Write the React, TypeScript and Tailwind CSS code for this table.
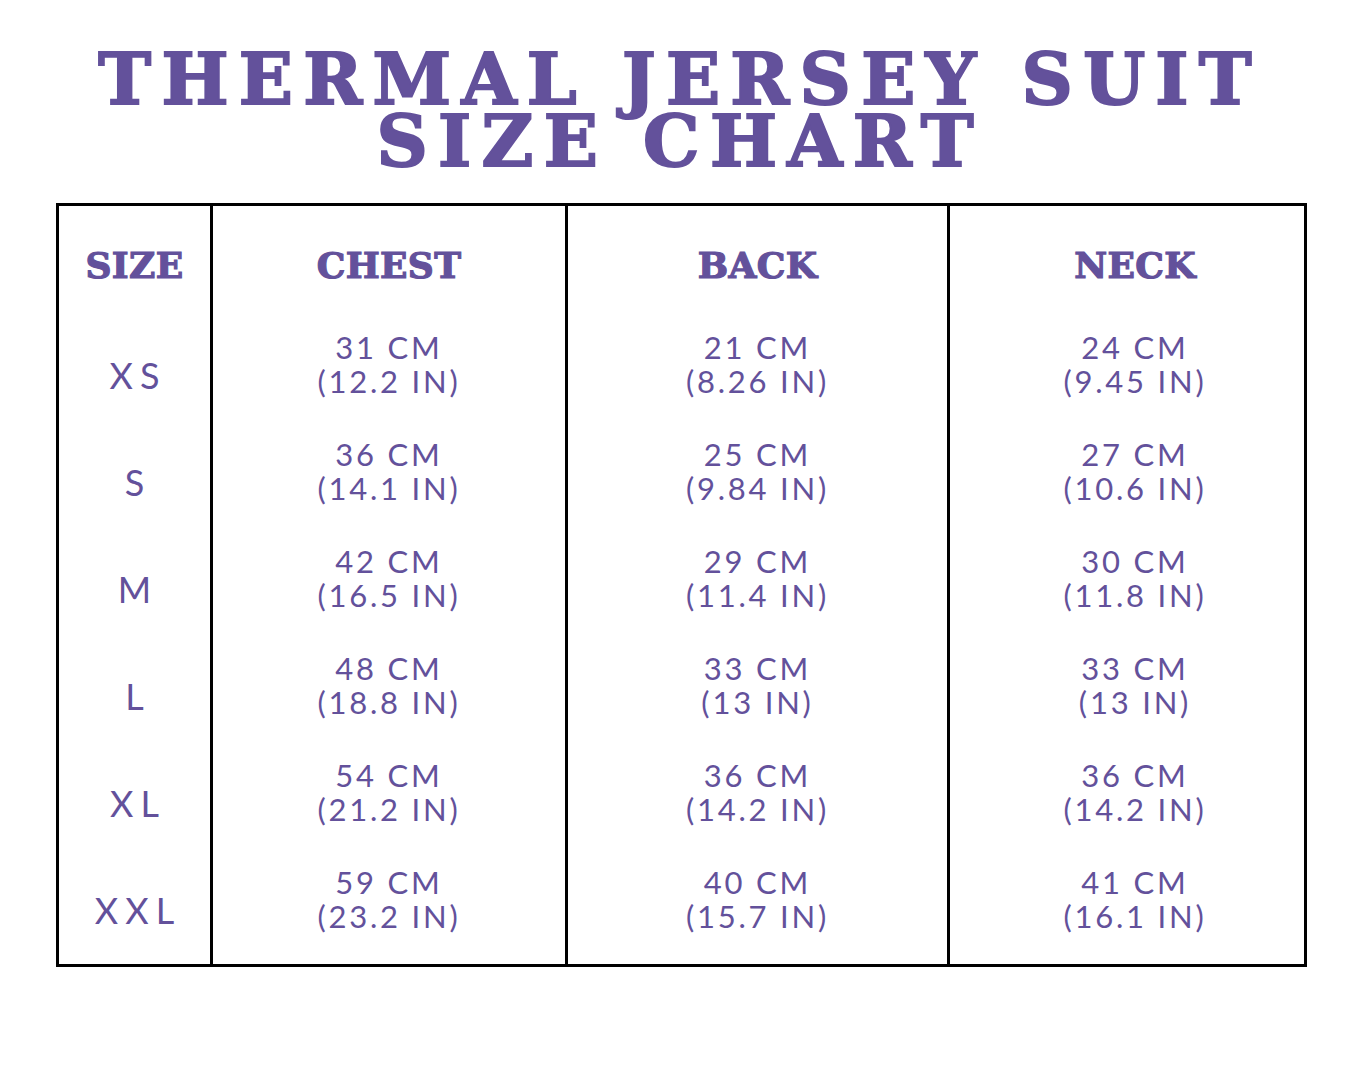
import React from "react";

const rows = [
  { size: "XS", chest: ["31 CM", "(12.2 IN)"], back: ["21 CM", "(8.26 IN)"], neck: ["24 CM", "(9.45 IN)"] },
  { size: "S", chest: ["36 CM", "(14.1 IN)"], back: ["25 CM", "(9.84 IN)"], neck: ["27 CM", "(10.6 IN)"] },
  { size: "M", chest: ["42 CM", "(16.5 IN)"], back: ["29 CM", "(11.4 IN)"], neck: ["30 CM", "(11.8 IN)"] },
  { size: "L", chest: ["48 CM", "(18.8 IN)"], back: ["33 CM", "(13 IN)"], neck: ["33 CM", "(13 IN)"] },
  { size: "XL", chest: ["54 CM", "(21.2 IN)"], back: ["36 CM", "(14.2 IN)"], neck: ["36 CM", "(14.2 IN)"] },
  { size: "XXL", chest: ["59 CM", "(23.2 IN)"], back: ["40 CM", "(15.7 IN)"], neck: ["41 CM", "(16.1 IN)"] },
];

const serif = "font-['DejaVu_Serif',serif] font-bold";
const sans = "font-['Lato',sans-serif]";

function Header({ label }: { label: string }) {
  return (
    <div className="h-[104px] flex items-center justify-center pt-[14px]">
      <span
        className={`${serif} text-[36px] leading-none text-[#63519b] tracking-[0.01em] [-webkit-text-stroke:1.2px_#63519b]`}
      >
        {label}
      </span>
    </div>
  );
}

function Cell({ lines }: { lines: string[] }) {
  return (
    <div className="h-[107px] flex flex-col items-center justify-center">
      {lines.map((l) => (
        <span key={l} className={`${sans} text-[31px] leading-[34px] text-[#63519b] tracking-[0.09em]`}>
          {l}
        </span>
      ))}
    </div>
  );
}

export default function App() {
  return (
    <div className="w-[1350px] h-[1080px] bg-white overflow-hidden">
      <div className="pt-[48px] flex flex-col items-center">
        <div
          className={`${serif} text-[71px] leading-[62px] text-[#63519b] tracking-[0.145em] pl-[0.145em] text-center uppercase [-webkit-text-stroke:2px_#63519b]`}
        >
          <div>THERMAL JERSEY SUIT</div>
          <div>SIZE CHART</div>
        </div>
      </div>
      <div className="mt-[31px] ml-[56px] w-[1251px] border-[3px] border-black flex">
        <div className="w-[154px] border-r-[3px] border-black">
          <Header label="SIZE" />
          {rows.map((r) => (
            <div key={r.size} className="h-[107px] flex items-center justify-center pt-[22px]">
              <span className={`${sans} text-[36px] leading-none text-[#63519b] tracking-[0.2em] pl-[0.2em]`}>
                {r.size}
              </span>
            </div>
          ))}
          <div className="h-[12px]" />
        </div>
        <div className="w-[355px] border-r-[3px] border-black">
          <Header label="CHEST" />
          {rows.map((r) => (
            <Cell key={r.size} lines={r.chest} />
          ))}
        </div>
        <div className="w-[382px] border-r-[3px] border-black">
          <Header label="BACK" />
          {rows.map((r) => (
            <Cell key={r.size} lines={r.back} />
          ))}
        </div>
        <div className="flex-1 pl-[16px]">
          <Header label="NECK" />
          {rows.map((r) => (
            <Cell key={r.size} lines={r.neck} />
          ))}
        </div>
      </div>
    </div>
  );
}
